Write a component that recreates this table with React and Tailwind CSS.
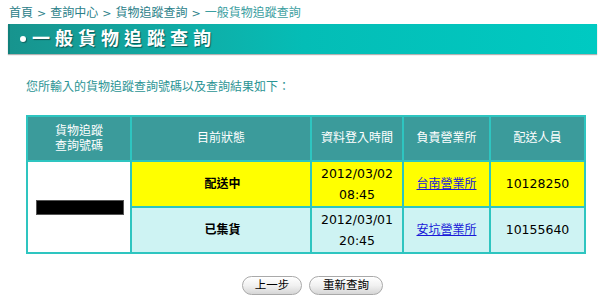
import React from "react";

const crumbs = ["首頁", "查詢中心", "貨物追蹤查詢"];

const rows = [
  { status: "配送中", date: "2012/03/02", time: "08:45", office: "台南營業所", staff: "10128250", bg: "bg-[#ffff00]" },
  { status: "已集貨", date: "2012/03/01", time: "20:45", office: "安坑營業所", staff: "10155640", bg: "bg-[#cef3f3]" },
];

function PillButton({ children, width }) {
  return (
    <button
      className={`${width} h-[19px] rounded-full border border-[#a9a9a9] bg-gradient-to-b from-white via-[#f1f1f1] to-[#d6d6d6] text-[11.5px] leading-[17px] text-black shadow-[inset_0_1px_0_#fff]`}
    >
      {children}
    </button>
  );
}

export default function App() {
  return (
    <div className="w-[604px] h-[302px] bg-white font-['DejaVu_Sans','Noto_Sans_CJK_TC',sans-serif] text-black">
      {/* breadcrumb */}
      <div className="pl-[9px] pt-[6px] h-[24px] text-[12px] leading-[14px] text-[#2a8088]">
        {crumbs.map((c) => (
          <span key={c}>
            {c}
            <span className="mx-[4px] text-[11px]">&gt;</span>
          </span>
        ))}
        <span className="text-[#3a9ea0]">一般貨物追蹤查詢</span>
      </div>

      {/* title bar */}
      <div className="ml-[8px] w-[589px] h-[30px] flex items-center border-l-2 border-[#10807b] bg-gradient-to-r from-[#17948e] via-[#04bdb6] to-[#00cac2] shadow-[0_1px_1px_rgba(0,0,0,0.3)]">
        <span className="ml-[10px] w-[6px] h-[6px] rounded-full bg-white shadow-[1px_1px_1px_rgba(0,0,0,0.35)]" />
        <span className="ml-[6px] text-[18px] leading-[20px] font-bold tracking-[5px] text-white [text-shadow:1px_1px_1px_rgba(0,0,0,0.45)]">
          一般貨物追蹤查詢
        </span>
      </div>

      <p className="mt-[26px] pl-[26px] text-[12px] leading-[14px] text-[#2b9494]">
        您所輸入的貨物追蹤查詢號碼以及查詢結果如下：
      </p>

      {/* result table */}
      <table className="mt-[21px] ml-[26px] w-[558px] table-fixed border-collapse text-center">
        <colgroup>
          <col className="w-[104px]" />
          <col className="w-[180px]" />
          <col className="w-[92px]" />
          <col className="w-[87px]" />
          <col className="w-[95px]" />
        </colgroup>
        <thead>
          <tr className="h-[45px] bg-[#3b9b9b] text-white text-[12px] leading-[15px]">
            <th className="border-2 border-[#2ec5c0] font-normal">
              貨物追蹤
              <br />
              查詢號碼
            </th>
            <th className="border-2 border-[#2ec5c0] font-normal">目前狀態</th>
            <th className="border-2 border-[#2ec5c0] font-normal">資料登入時間</th>
            <th className="border-2 border-[#2ec5c0] font-normal">負責營業所</th>
            <th className="border-2 border-[#2ec5c0] font-normal">配送人員</th>
          </tr>
        </thead>
        <tbody>
          {rows.map((r, i) => (
            <tr key={r.staff} className={`h-[46px] ${r.bg}`}>
              {i === 0 && (
                <td rowSpan={2} className="border-2 border-[#2ec5c0] bg-white">
                  <div className="ml-[8px] mt-[1px] w-[88px] h-[15px] bg-black border border-[#555]" />
                </td>
              )}
              <td className="border-2 border-[#2ec5c0] text-[12px] font-bold pl-[3px]">{r.status}</td>
              <td className="border-2 border-[#2ec5c0] text-[12.5px] leading-[21px]">
                {r.date}
                <br />
                {r.time}
              </td>
              <td className="border-2 border-[#2ec5c0] text-[12px]">
                <a href="#" className="text-[#1a1ad8] underline">
                  {r.office}
                </a>
              </td>
              <td className="border-2 border-[#2ec5c0] text-[12.5px]">{r.staff}</td>
            </tr>
          ))}
        </tbody>
      </table>

      <div className="mt-[22px] pl-[21px] flex justify-center gap-[7px]">
        <PillButton width="w-[60px]">上一步</PillButton>
        <PillButton width="w-[74px]">重新查詢</PillButton>
      </div>
    </div>
  );
}
